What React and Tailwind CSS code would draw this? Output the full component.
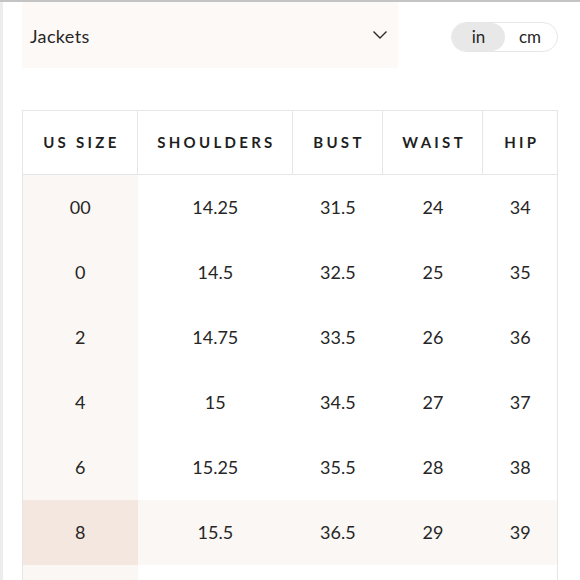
import React from "react";

const cols = [
  { key: "size", label: "US SIZE", w: "w-[115px]" },
  { key: "shoulders", label: "SHOULDERS", w: "w-[156px]" },
  { key: "bust", label: "BUST", w: "w-[90px]" },
  { key: "waist", label: "WAIST", w: "w-[101px]" },
  { key: "hip", label: "HIP", w: "w-[74px]" },
];

const rows = [
  ["00", "14.25", "31.5", "24", "34"],
  ["0", "14.5", "32.5", "25", "35"],
  ["2", "14.75", "33.5", "26", "36"],
  ["4", "15", "34.5", "27", "37"],
  ["6", "15.25", "35.5", "28", "38"],
  ["8", "15.5", "36.5", "29", "39"],
];

const App = () => {
  const selected = "8";

  return (
    <div className="w-[580px] h-[580px] overflow-hidden bg-white flex flex-col font-['Lato',sans-serif] text-[#262626]">
      <div className="h-[2px] bg-[#c4c4c4] shrink-0" />
      <div className="flex flex-1">
        <div className="w-[3px] bg-[#ededed] shrink-0" />
        <div className="flex-1 pl-[19px] pr-[22px]">
          {/* size category + unit toggle */}
          <div className="flex items-start">
            <div className="w-[376px] h-[66px] bg-[#fdf9f6] flex items-center justify-between pl-[8px] pr-[10px]">
              <span className="text-[18px] tracking-[0.02em] mt-[2px]">Jackets</span>
              <svg width="16" height="10" viewBox="0 0 16 10" fill="none">
                <path d="M1.5 1.5 L8 8 L14.5 1.5" stroke="#2a2a2a" strokeWidth="1.4" />
              </svg>
            </div>
            <div className="ml-auto mt-[20px] flex h-[30px] w-[107px] rounded-full border border-[#e6e6e6] overflow-hidden text-[17px]">
              <div className="w-[53px] bg-[#e8e8e8] rounded-full flex items-center justify-center">in</div>
              <div className="flex-1 flex items-center justify-center pr-[2px]">cm</div>
            </div>
          </div>

          {/* size table */}
          <div className="mt-[42px] w-[536px]">
            <div className="flex h-[65px] border border-[#e6e6e6]">
              {cols.map((c, i) => (
                <div
                  key={c.key}
                  className={`${c.w} ${i < cols.length - 1 ? "border-r border-[#e6e6e6]" : ""} flex items-center justify-center text-[15px] font-bold tracking-[0.22em] pl-[0.22em] text-[#1f1f1f]`}
                >
                  {c.label}
                </div>
              ))}
            </div>
            <div className="border-l border-r border-[#e6e6e6]">
              {rows.map((r) => {
                const hi = r[0] === selected;
                return (
                  <div key={r[0]} className={`flex h-[65px] ${hi ? "bg-[#faf7f4]" : ""}`}>
                    {r.map((v, i) => (
                      <div
                        key={i}
                        className={`${cols[i].w} flex items-center justify-center text-[18px] ${
                          i === 0 ? (hi ? "bg-[#f3e7e0]" : "bg-[#faf7f4]") : ""
                        }`}
                      >
                        {v}
                      </div>
                    ))}
                  </div>
                );
              })}
              {/* next row, starts below the fold */}
              <div className="flex h-[20px]">
                <div className="w-[115px] bg-[#faf7f4]" />
              </div>
            </div>
          </div>
        </div>
      </div>
    </div>
  );
};

export default App;
